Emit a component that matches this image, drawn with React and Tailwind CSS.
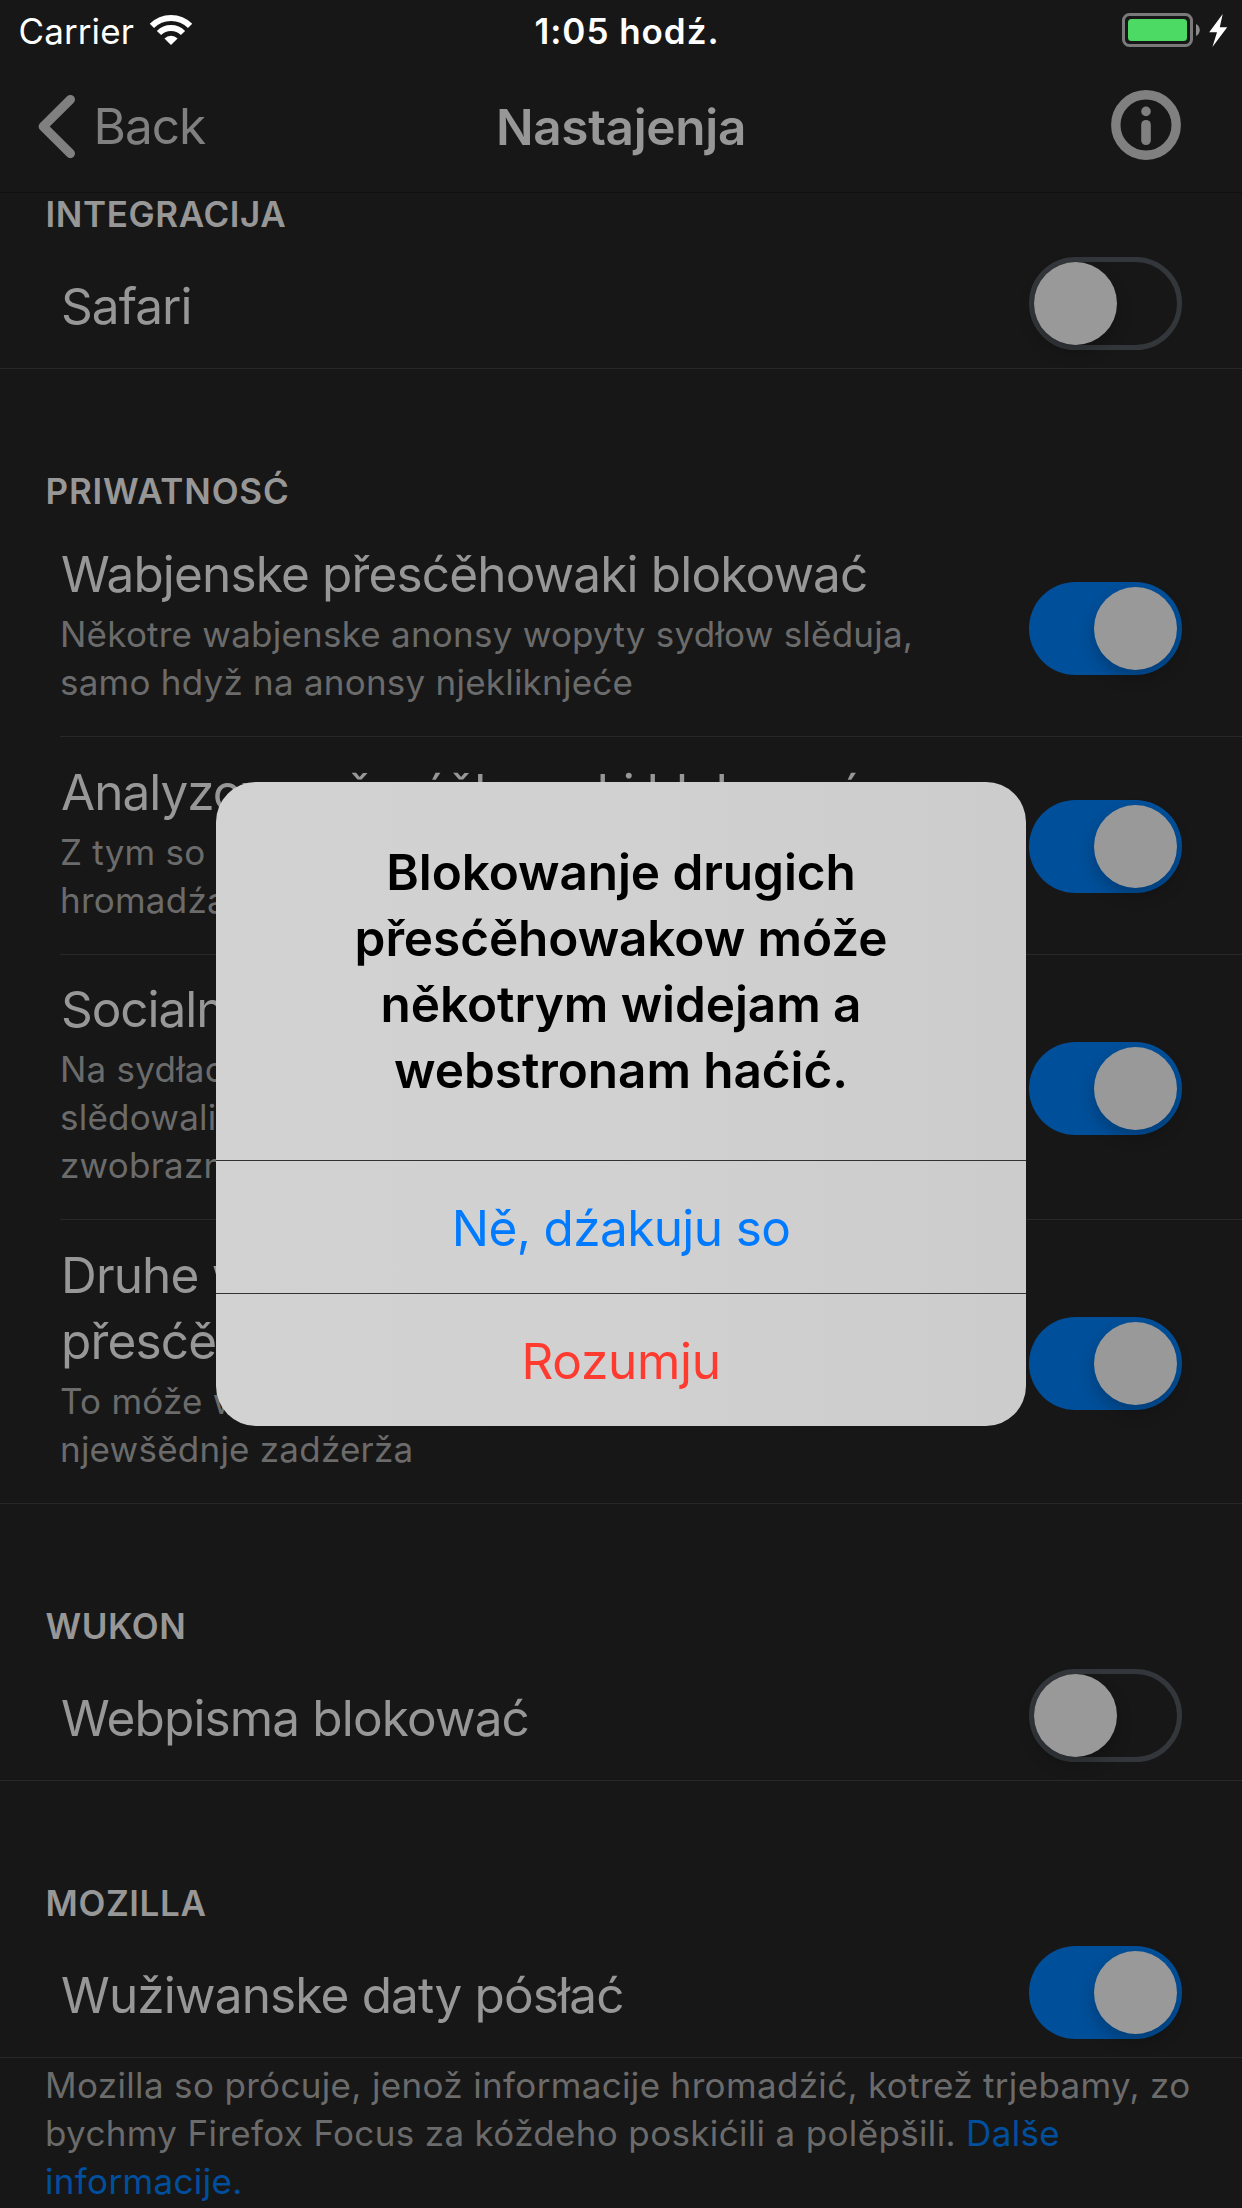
import React from 'react';

function Switch({ on, className }) {
  return (
    <div
      className={`flex h-[93px] w-[153px] shrink-0 items-center rounded-full ${
        on ? 'justify-end bg-[#004f9a] pr-[5px]' : 'border-[5px] border-[#33373b]'
      } ${className}`}
    >
      <div className="size-[83px] shrink-0 rounded-full bg-[#999999] shadow-[0_8px_16px_rgba(0,0,0,0.22)]" />
    </div>
  );
}

function SectionTitle({ children, className = '' }) {
  return (
    <h2 className={`pl-[45.5px] text-[35px] font-semibold leading-[42px] text-[#979797] ${className}`}>
      {children}
    </h2>
  );
}

function Row({ title, description, on = false, pad, switchTop, tracking = 'tracking-[-0.84px]', divider = 'full' }) {
  return (
    <div className={divider === 'inset' ? 'pl-[60px]' : ''}>
      <div
        className={`flex items-start justify-between border-b border-[#282828] pr-[60px] ${
          divider === 'inset' ? 'pl-px' : 'pl-[61px]'
        }`}
      >
        <div className={pad}>
          <div className={`whitespace-pre text-[49.5px] leading-[66px] text-[#979797] ${tracking}`}>{title}</div>
          {description && (
            <div className="-ml-px mt-[3px] whitespace-pre text-[35px] leading-[48px] tracking-[0.23px] text-[#6b6b6b]">
              {description}
            </div>
          )}
        </div>
        <Switch on={on} className={switchTop} />
      </div>
    </div>
  );
}

function StatusBar() {
  return (
    <div className="grid h-[60px] grid-cols-3 pt-[7px] text-[35px] leading-[48px] text-white">
      <div className="flex items-start pl-[18.5px]">
        <span className="tracking-[0.1px]">Carrier</span>
        <svg className="ml-[15px] mt-[7px]" width="44" height="32" viewBox="149 14 44 32" fill="none" stroke="#fff" strokeWidth="6">
          <path d="M151.9 25.9A27 27 0 0 1 190.1 25.9" />
          <path d="M159 33A17 17 0 0 1 183 33" />
          <path d="M171 45L164.4 38.4A9.3 9.3 0 0 1 177.6 38.4Z" fill="#fff" stroke="none" />
        </svg>
      </div>
      <div className="pl-[12px] text-center font-semibold tracking-[0.97px]">1:05 hodź.</div>
      <div className="flex items-start justify-end pr-[14px]">
        <svg className="mt-[5px]" width="107" height="36" viewBox="1121 12 107 36">
          <rect x="1123.5" y="14.5" width="68" height="31" rx="6" fill="none" stroke="#7a7a7a" strokeWidth="3" />
          <rect x="1128" y="19" width="59" height="22" rx="3.5" fill="#4cd964" />
          <path d="M1196 24C1201 26 1201 34 1196 36Z" fill="#8b8b8b" />
          <path d="M1222.7 14L1209.2 32.2H1217L1212.4 47L1227.2 27.2H1219.8Z" fill="#fff" />
        </svg>
      </div>
    </div>
  );
}

function NavBar() {
  return (
    <div className="grid h-[133px] grid-cols-3 border-b border-[#101010] text-[49.5px] leading-[66px]">
      <div className="flex items-start pl-[38px] pt-[33px]">
        <svg className="mt-px" width="38" height="66" viewBox="38 94 38 66" fill="none" stroke="#808080" strokeWidth="9.2" strokeLinecap="round" strokeLinejoin="round">
          <path d="M70.4 99.6L43.2 126.6L70.4 153.6" />
        </svg>
        <span className="ml-[17.5px] tracking-[-1px] text-[#808080]">Back</span>
      </div>
      <div className="pt-[34px] text-center font-semibold tracking-[-0.31px] text-[#979797]">Nastajenja</div>
      <div className="flex items-start justify-end pr-[60px] pt-[29px]">
        <svg width="72" height="72" viewBox="0 0 72 72" fill="#808080">
          <circle cx="36" cy="36" r="30.2" fill="none" stroke="#808080" strokeWidth="9.4" />
          <circle cx="36" cy="22.4" r="4.8" />
          <rect x="31.2" y="31" width="9.6" height="25" rx="4.6" />
        </svg>
      </div>
    </div>
  );
}

function AlertDialog() {
  return (
    <div className="absolute left-[216px] top-[782px] flex h-[644px] w-[810px] flex-col overflow-hidden rounded-[40px] bg-[#d0d0d0] bg-linear-to-r from-[#d2d2d2] via-[#d1d1d1] to-[#cccccc] text-center text-[49.5px] leading-[66px]">
      <div className="h-[378px] pt-[57px] font-semibold tracking-[-0.08px] text-black">
        Blokowanje drugich
        <br />
        přesćěhowakow móže
        <br />
        někotrym widejam a
        <br />
        webstronam haćić.
      </div>
      <div className="h-[133px] border-t border-[#323232] pt-[34px] tracking-[-0.62px] text-[#007aff]">Ně, dźakuju so</div>
      <div className="h-[133px] border-t border-[#323232] pt-[34px] tracking-[-0.3px] text-[#ff3b30]">Rozumju</div>
    </div>
  );
}

export default function App() {
  return (
    <div className="relative h-[2208px] w-[1242px] overflow-hidden bg-[#171717] font-[Inter,sans-serif]">
      <StatusBar />
      <NavBar />

      <SectionTitle className="tracking-[0.6px]">INTEGRACIJA</SectionTitle>
      <Row title="Safari" tracking="tracking-[-0.95px]" pad="pt-[38px] pb-[29px]" switchTop="mt-[22px]" />

      <SectionTitle className="mt-[101px] tracking-[0.8px]">PRIWATNOSĆ</SectionTitle>
      <Row
        on
        divider="inset"
        title="Wabjenske přesćěhowaki blokować"
        description={'Někotre wabjenske anonsy wopyty sydłow slěduja,\nsamo hdyž na anonsy njekliknjeće'}
        pad="pt-[29px] pb-[30px]"
        switchTop="mt-[70px]"
      />
      <Row
        on
        divider="inset"
        title="Analyzowe přesćěhowaki blokować"
        tracking="tracking-[-1px]"
        description={'Z tym so aktiwity\nhromadźa'}
        pad="pt-[22px] pb-[30px]"
        switchTop="mt-[63px]"
      />
      <Row
        on
        divider="inset"
        title="Socialne přesćěhowaki"
        tracking="tracking-[-1.05px]"
        description={'Na sydłach\nslědowali\nzwobraznili'}
        pad="pt-[21px] pb-[30px]"
        switchTop="mt-[87px]"
      />
      <Row
        on
        title={'Druhe wobsahowe\npřesćěhowaki'}
        description={'To móže wideja\nnjewšědnje zadźerža'}
        pad="pt-[22px] pb-[30px]"
        switchTop="mt-[97px]"
      />

      <SectionTitle className="mt-[101px] tracking-[0.5px]">WUKON</SectionTitle>
      <Row title="Webpisma blokować" pad="pt-[38px] pb-[29px]" switchTop="mt-[22px]" />

      <SectionTitle className="mt-[101px] tracking-[0.6px]">MOZILLA</SectionTitle>
      <Row on title="Wužiwanske daty pósłać" pad="pt-[38px] pb-[29px]" switchTop="mt-[22px]" />

      <p className="whitespace-nowrap pl-[45px] pt-[3px] text-[35px] leading-[48px] tracking-[0.34px] text-[#6b6b6b]">
        Mozilla so prócuje, jenož informacije hromadźić, kotrež trjebamy, zo
        <br />
        bychmy Firefox Focus za kóždeho poskićili a polěpšili.{' '}
        <a className="text-[#004f9e]">
          Dalše
          <br />
          informacije.
        </a>
      </p>

      <AlertDialog />
    </div>
  );
}
